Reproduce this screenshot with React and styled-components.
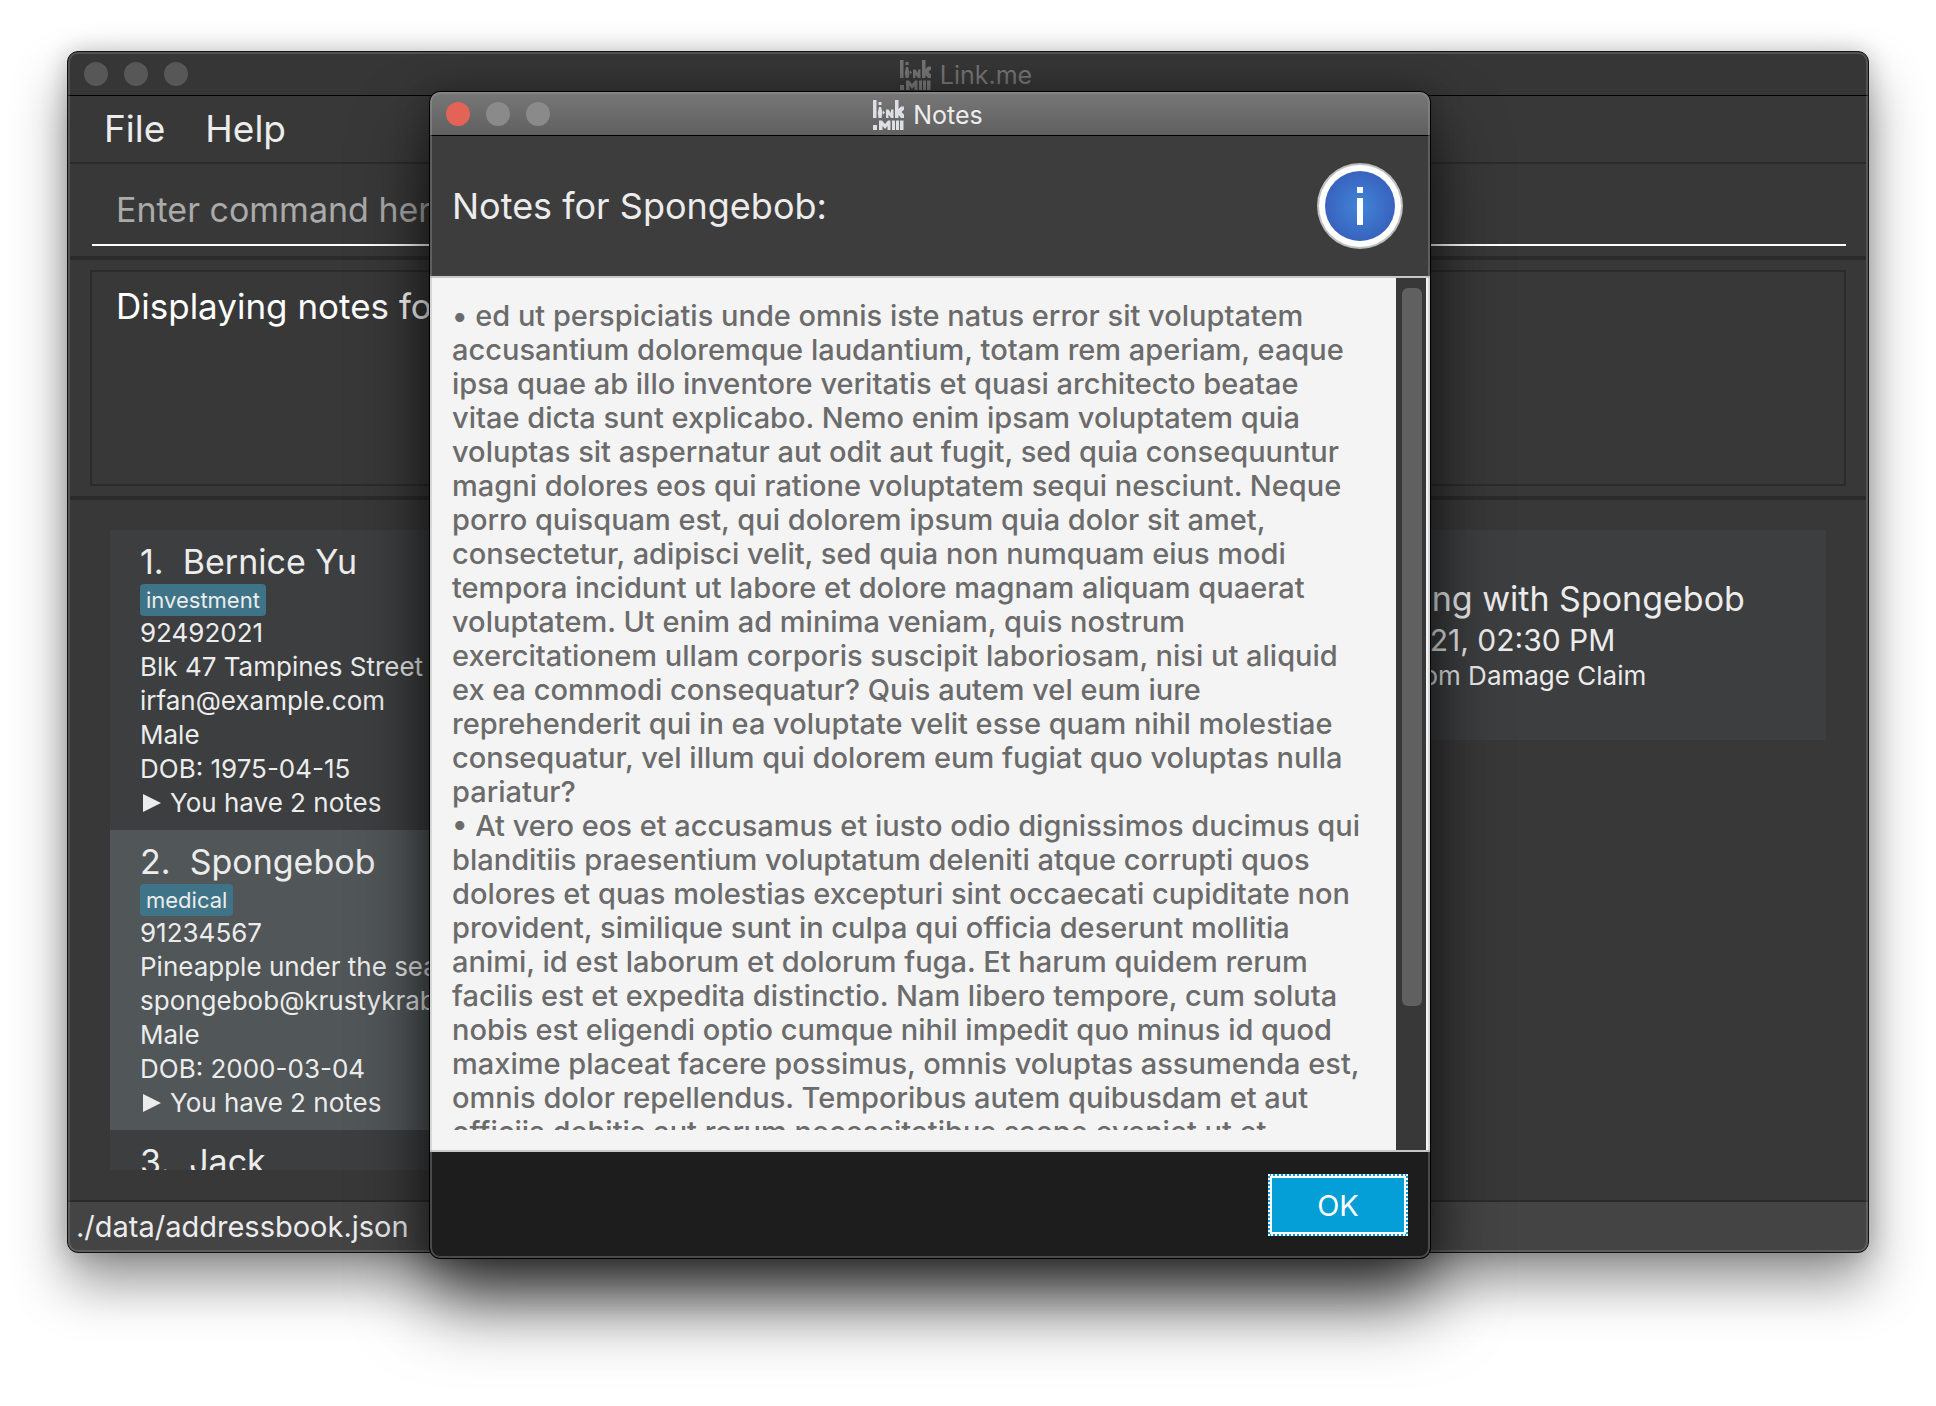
import React from "react";
import styled, { createGlobalStyle } from "styled-components";

const Global = createGlobalStyle`
  * { box-sizing: border-box; }
  body { margin: 0; background: #fff; font-family: Inter, "Liberation Sans", sans-serif; }
  button, input { font: inherit; color: inherit; margin: 0; }
  h1, h2, h3, p, ul, ol { margin: 0; padding: 0; font-weight: 400; }
  ul, ol { list-style: none; }
`;

const Desktop = styled.div`
  position: relative;
  display: flex;
  min-height: 100vh;
  overflow: hidden;
  padding: 51px 67px 153px;
`;

const AppWindow = styled.main`
  flex: 1;
  min-width: 0;
  display: flex;
  flex-direction: column;
  border: 1px solid #111;
  border-radius: 11px;
  overflow: hidden;
  background: #383838;
  color: #ececec;
  box-shadow: 0 30px 54px rgba(0, 0, 0, 0.42), 0 0 24px rgba(0, 0, 0, 0.2);
  position: relative;

  &::after {
    content: "";
    position: absolute;
    inset: 0;
    border: 2px solid rgba(255, 255, 255, 0.14);
    border-radius: 10px;
    pointer-events: none;
  }
`;

const TitleBar = styled.header`
  flex: none;
  display: grid;
  grid-template-columns: 1fr auto 1fr;
  align-items: center;
  height: 44px;
  padding: 0 20px 0 16px;
  border-bottom: 1px solid #000;
  background: ${(p) => (p.$active ? "linear-gradient(#777, #606060)" : "#363636")};
  color: ${(p) => (p.$active ? "#ececec" : "#747474")};
`;

const Lights = styled.div`
  display: flex;
  gap: 16px;
`;

const Light = styled.button`
  width: 24px;
  height: 24px;
  padding: 0;
  border: 0;
  border-radius: 50%;
  background: ${(p) => p.$color};
`;

const Title = styled.h1`
  display: flex;
  align-items: center;
  gap: 8px;
  padding-top: 2px;
  font-size: 25px;
  line-height: 32px;
`;

const MenuBar = styled.nav`
  flex: none;
  display: flex;
  gap: 40px;
  height: 68px;
  padding: 0 34px;
  margin: 0 2px;
  border-bottom: 2px solid #2b2b2b;
`;

const MenuItem = styled.button`
  border: 0;
  padding: 0;
  background: none;
  font-size: 37px;
  line-height: 64px;
`;

const CommandBar = styled.form`
  flex: none;
  height: 96px;
  padding: 12px 20px 12px 22px;
  margin: 0 2px;
  border-bottom: 4px solid #2b2b2b;
`;

const CommandInput = styled.input`
  display: block;
  width: 100%;
  height: 70px;
  padding: 0 24px 2px;
  border: 0;
  border-bottom: 2px solid #fff;
  background: none;
  outline: none;
  font-size: 34px;
  &::placeholder { color: #aaa; opacity: 1; }
`;

const ResultArea = styled.section`
  flex: none;
  height: 240px;
  padding: 10px 20px;
  margin: 0 2px;
  border-bottom: 4px solid #2b2b2b;
`;

const ResultBox = styled.div`
  height: 216px;
  padding: 12px 24px;
  border: 2px solid #2b2b2b;
  color: #fff;
  font-size: 35px;
  line-height: 44px;
`;

const Panels = styled.div`
  flex: 1;
  min-height: 0;
  display: grid;
  grid-template-columns: minmax(0, 1fr) 514px;
  gap: 60px;
  padding: 30px 42px;
`;

const List = styled.ul`
  position: relative;
  height: 640px;
  overflow: hidden;
`;

const Card = styled.li`
  height: ${(p) => p.$height};
  padding: 10px 30px;
  background: ${(p) => (p.$selected ? "#515658" : "#3c3e3f")};
  font-size: 26px;
  line-height: 34px;
  white-space: nowrap;
`;

const CardTitle = styled.h2`
  font-size: 34px;
  line-height: 44px;
  white-space: pre;
`;

const Tag = styled.span`
  display: block;
  width: fit-content;
  height: 32px;
  padding: 0 6px;
  border-radius: 4px;
  background: #3f7488;
  font-size: 22px;
  line-height: 32px;
`;

const NotesLine = styled.p`
  display: flex;
  align-items: center;
  gap: 9px;
  svg { margin-left: 3px; }
`;

const Meeting = styled(Card)`
  display: flex;
  flex-direction: column;
  justify-content: center;
`;

const MeetingTime = styled.p`
  font-size: 30px;
  line-height: 38px;
`;

const StatusBar = styled.footer`
  flex: none;
  height: 52px;
  padding: 0 8px;
  border-top: 2px solid #2b2b2b;
  background: #444;
  font-size: 29px;
  line-height: 50px;
`;

const Dialog = styled.section`
  position: absolute;
  top: 91px;
  left: 429px;
  width: 1002px;
  display: flex;
  flex-direction: column;
  border: 1px solid #000;
  border-radius: 11px;
  overflow: hidden;
  background: #1d1d1d;
  color: #ececec;
  box-shadow: 0 44px 72px rgba(0, 0, 0, 0.65), 0 0 32px rgba(0, 0, 0, 0.3);

  &::after {
    content: "";
    position: absolute;
    inset: 0;
    border: 2px solid rgba(160, 160, 160, 0.35);
    border-radius: 10px;
    pointer-events: none;
  }
`;

const DialogHeader = styled.div`
  display: flex;
  align-items: center;
  justify-content: space-between;
  height: 140px;
  padding: 0 27px 0 22px;
  background: #3d3d3d;
`;

const DialogHeading = styled.h2`
  font-size: 36px;
  line-height: 44px;
`;

const DialogBody = styled.div`
  display: flex;
  height: 876px;
  padding-right: 4px;
  border: solid #c8c8c8;
  border-width: 2px 0;
  background: #f4f4f4;
`;

const NotesText = styled.div`
  flex: 1;
  min-width: 0;
  height: 831px;
  margin: 21px 0 0 22px;
  overflow: hidden;
  color: #6b6b6b;
  font-size: 29px;
  font-weight: 500;
  line-height: 34px;
  white-space: pre;
`;

const ScrollTrack = styled.div`
  width: 30px;
  padding: 10px 4px 10px 6px;
  background: #383838;
`;

const ScrollThumb = styled.div`
  height: 718px;
  border-radius: 6px;
  background: #606060;
`;

const DialogFooter = styled.div`
  display: flex;
  justify-content: flex-end;
  padding: 22px;
`;

const OkButton = styled.button`
  width: 140px;
  height: 62px;
  padding: 0;
  border: 2px dotted #fff;
  background: #059fd8;
  box-shadow: inset 0 0 0 2px #fff;
  color: #fff;
  font-size: 29px;
`;

function Logo({ color }) {
  return (
    <svg width="32" height="30" viewBox="0 0 32 30" fill={color} aria-hidden="true">
      <path d="M0 0H3.500V18H0ZM5.500 2H8.500V5H5.500ZM6 7H8L9.500 12.500L8.500 18H5.500L4.800 12.500Z" />
      <path d="M10 10.500L12 12.500L10 14.500ZM13 9.500H15.500L18 13V9.500H20.500V18H18L15.500 14.500V18H13Z" />
      <path d="M22 0H25.500V9L28 6.500H31V9.500L28.500 12L31 14.500V18H28L25.500 15V18H22Z" />
      <path d="M0 25H4V30H0ZM6 20.500H9L12 24L15 20.500H17.500V30H14.500V26L12 29L9.500 26V30H6Z" />
      <path d="M19 20.500H22V30H19ZM23 20.500H26V30H23ZM27 20.500H30.500V30H27Z" />
    </svg>
  );
}

function InfoIcon() {
  return (
    <svg width="86" height="86" viewBox="0 0 86 86" role="img" aria-label="Information">
      <defs>
        <radialGradient id="info"><stop offset="0" stopColor="#4285d8" /><stop offset="1" stopColor="#3863bd" /></radialGradient>
      </defs>
      <circle cx="43" cy="43" r="43" fill="#bfbfbf" />
      <circle cx="43" cy="43" r="41" fill="#fff" />
      <circle cx="43" cy="43" r="35" fill="url(#info)" />
      <path fill="#fff" d="M40 24h6v6h-6zM40 35h6v27h-6z" />
    </svg>
  );
}

function Person({ index, name, tag, lines, notes, selected }) {
  return (
    <Card $height="300px" $selected={selected}>
      <CardTitle>{`${index}.  ${name}`}</CardTitle>
      {tag && <Tag>{tag}</Tag>}
      {lines.map((line) => <p key={line}>{line}</p>)}
      {notes && (
        <NotesLine>
          <svg width="18" height="18" viewBox="0 0 18 18" aria-hidden="true"><path d="M0 0L18 9L0 18Z" fill="#ececec" /></svg>
          {notes}
        </NotesLine>
      )}
    </Card>
  );
}

const notesText = `• ed ut perspiciatis unde omnis iste natus error sit voluptatem
accusantium doloremque laudantium, totam rem aperiam, eaque
ipsa quae ab illo inventore veritatis et quasi architecto beatae
vitae dicta sunt explicabo. Nemo enim ipsam voluptatem quia
voluptas sit aspernatur aut odit aut fugit, sed quia consequuntur
magni dolores eos qui ratione voluptatem sequi nesciunt. Neque
porro quisquam est, qui dolorem ipsum quia dolor sit amet,
consectetur, adipisci velit, sed quia non numquam eius modi
tempora incidunt ut labore et dolore magnam aliquam quaerat
voluptatem. Ut enim ad minima veniam, quis nostrum
exercitationem ullam corporis suscipit laboriosam, nisi ut aliquid
ex ea commodi consequatur? Quis autem vel eum iure
reprehenderit qui in ea voluptate velit esse quam nihil molestiae
consequatur, vel illum qui dolorem eum fugiat quo voluptas nulla
pariatur?
• At vero eos et accusamus et iusto odio dignissimos ducimus qui
blanditiis praesentium voluptatum deleniti atque corrupti quos
dolores et quas molestias excepturi sint occaecati cupiditate non
provident, similique sunt in culpa qui officia deserunt mollitia
animi, id est laborum et dolorum fuga. Et harum quidem rerum
facilis est et expedita distinctio. Nam libero tempore, cum soluta
nobis est eligendi optio cumque nihil impedit quo minus id quod
maxime placeat facere possimus, omnis voluptas assumenda est,
omnis dolor repellendus. Temporibus autem quibusdam et aut
officiis debitis aut rerum necessitatibus saepe eveniet ut et`;

export default function App() {
  return (
    <Desktop>
      <Global />
      <AppWindow>
        <TitleBar>
          <Lights>
            {["Close", "Minimize", "Zoom"].map((n) => <Light key={n} type="button" aria-label={n} $color="#575757" />)}
          </Lights>
          <Title><Logo color="#747474" />Link.me</Title>
        </TitleBar>
        <MenuBar>
          <MenuItem type="button">File</MenuItem>
          <MenuItem type="button">Help</MenuItem>
        </MenuBar>
        <CommandBar onSubmit={(e) => e.preventDefault()}>
          <CommandInput type="text" aria-label="Command" placeholder="Enter command here..." />
        </CommandBar>
        <ResultArea>
          <ResultBox>Displaying notes for Spongebob</ResultBox>
        </ResultArea>
        <Panels>
          <List>
            <Person index={1} name="Bernice Yu" tag="investment" notes="You have 2 notes"
              lines={["92492021", "Blk 47 Tampines Street 20", "irfan@example.com", "Male", "DOB: 1975-04-15"]} />
            <Person selected index={2} name="Spongebob" tag="medical" notes="You have 2 notes"
              lines={["91234567", "Pineapple under the sea", "spongebob@krustykrab.com", "Male", "DOB: 2000-03-04"]} />
            <Person index={3} name="Jack" lines={[]} />
          </List>
          <List>
            <Meeting $height="210px">
              <CardTitle>Meeting with Spongebob</CardTitle>
              <MeetingTime>Jul 2021, 02:30 PM</MeetingTime>
              <p>Bathroom Damage Claim</p>
            </Meeting>
          </List>
        </Panels>
        <StatusBar>./data/addressbook.json</StatusBar>
      </AppWindow>
      <Dialog role="dialog" aria-label="Notes">
        <TitleBar $active>
          <Lights>
            <Light type="button" aria-label="Close" $color="#e36357" />
            <Light type="button" aria-label="Minimize" $color="#8a8a8a" />
            <Light type="button" aria-label="Zoom" $color="#8a8a8a" />
          </Lights>
          <Title><Logo color="#dce0e4" />Notes</Title>
        </TitleBar>
        <DialogHeader>
          <DialogHeading>Notes for Spongebob:</DialogHeading>
          <InfoIcon />
        </DialogHeader>
        <DialogBody>
          <NotesText>{notesText}</NotesText>
          <ScrollTrack><ScrollThumb /></ScrollTrack>
        </DialogBody>
        <DialogFooter>
          <OkButton type="button">OK</OkButton>
        </DialogFooter>
      </Dialog>
    </Desktop>
  );
}
